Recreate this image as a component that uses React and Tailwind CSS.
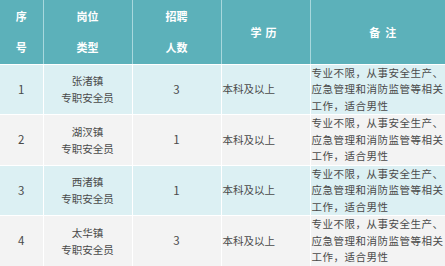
import React from "react";

const rows = [
  { n: "1", town: "张渚镇", num: "3" },
  { n: "2", town: "湖汊镇", num: "1" },
  { n: "3", town: "西渚镇", num: "1" },
  { n: "4", town: "太华镇", num: "3" },
];

export default function App() {
  return (
    <div className="w-[445px] h-[266px] overflow-hidden bg-white" style={{ fontFamily: '"Noto Sans CJK SC", "Noto Sans", sans-serif' }}>
      <table className="table-fixed border-collapse w-[460px] text-[10.5px] text-[#4a4a4a]">
        <colgroup>
          <col className="w-[43px]" />
          <col className="w-[89px]" />
          <col className="w-[89px]" />
          <col className="w-[89px]" />
          <col className="w-[150px]" />
        </colgroup>
        <thead>
          <tr className="bg-[#5cb1ba] text-white font-bold text-[11px]">
            <th className="h-[64px] border-r border-[#a8d8dd] border-b border-b-white p-0 leading-[31px]">序<br />号</th>
            <th className="h-[64px] border-r border-[#a8d8dd] border-b border-b-white p-0 leading-[31px]">岗位<br />类型</th>
            <th className="h-[64px] border-r border-[#a8d8dd] border-b border-b-white p-0 leading-[31px]">招聘<br />人数</th>
            <th className="h-[64px] border-r border-[#a8d8dd] border-b border-b-white p-0 tracking-[4px]">学历</th>
            <th className="h-[64px] border-b border-b-white p-0 tracking-[5px]">备注</th>
          </tr>
        </thead>
        <tbody>
          {rows.map((r, i) => (
            <tr key={r.n} className={i % 2 === 0 ? "bg-[#dcf0f3]" : "bg-[#f3f3f3]"}>
              <td className="border-r border-b border-white p-0 text-center text-[11.5px]">{r.n}</td>
              <td className="border-r border-b border-white p-0 text-center leading-[17px]">{r.town}<br />专职安全员</td>
              <td className="border-r border-b border-white p-0 text-center text-[11.5px]">{r.num}</td>
              <td className="border-r border-b border-white p-0 pl-[1px]">本科及以上</td>
              <td className="border-b border-white p-0 pl-[1px] h-[50px] leading-[16.5px] text-[10.5px] tracking-[0.5px] whitespace-nowrap">
                专业不限，从事安全生产、<br />应急管理和消防监管等相关<br />工作，适合男性
              </td>
            </tr>
          ))}
        </tbody>
      </table>
    </div>
  );
}
